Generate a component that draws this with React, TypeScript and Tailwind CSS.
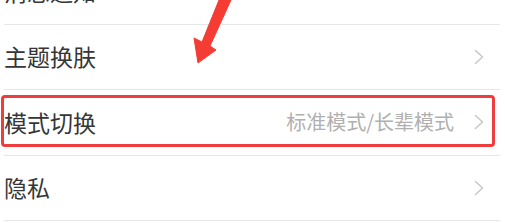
import React from 'react'

type Row = { title: string; value?: string; marked?: boolean }

const rows: Row[] = [
  { title: '消息通知' },
  { title: '主题换肤' },
  { title: '模式切换', value: '标准模式/长辈模式', marked: true },
  { title: '隐私' },
]

function Chevron() {
  return (
    <svg width="10" height="16" viewBox="0 0 10 16" className="shrink-0">
      <polyline points="1.5,1.5 8.5,8 1.5,14.5" fill="none" stroke="#c9c9c9" strokeWidth="1.6" strokeLinecap="round" strokeLinejoin="round" />
    </svg>
  )
}

export default function App() {
  return (
    <div
      className="relative h-[223px] w-[505px] overflow-hidden bg-white"
      style={{ fontFamily: '"Noto Sans CJK SC", "Noto Sans", sans-serif' }}
    >
      <div className="mt-[-41px]">
        {rows.map((row) => (
          <div
            key={row.title}
            className="relative ml-[4px] mr-[5px] flex h-[65.5px] items-center justify-between border-b border-[#e6e6e6]"
          >
            <span className="text-[23px] leading-none text-[#363636]">{row.title}</span>
            <div className="flex items-center gap-[20px] pr-[16px]">
              {row.value && (
                <span className="text-[20px] leading-none text-[#b0b0b0]">{row.value}</span>
              )}
              <Chevron />
            </div>
            {row.marked && (
              <div className="pointer-events-none absolute left-[-3px] top-[4.5px] h-[52.5px] w-[494px] rounded-[4px] border-[3px] border-[#ef3d3d]" />
            )}
          </div>
        ))}
      </div>

      {/* annotation arrow */}
      <svg className="absolute left-0 top-0" width="505" height="223" viewBox="0 0 505 223">
        <polygon
          points="219,0 231,0 210,46 216,50 198,63 194,38 202,42"
          fill="#f43c34"
          stroke="#f43c34"
          strokeWidth="1"
          strokeLinejoin="round"
        />
      </svg>
    </div>
  )
}
